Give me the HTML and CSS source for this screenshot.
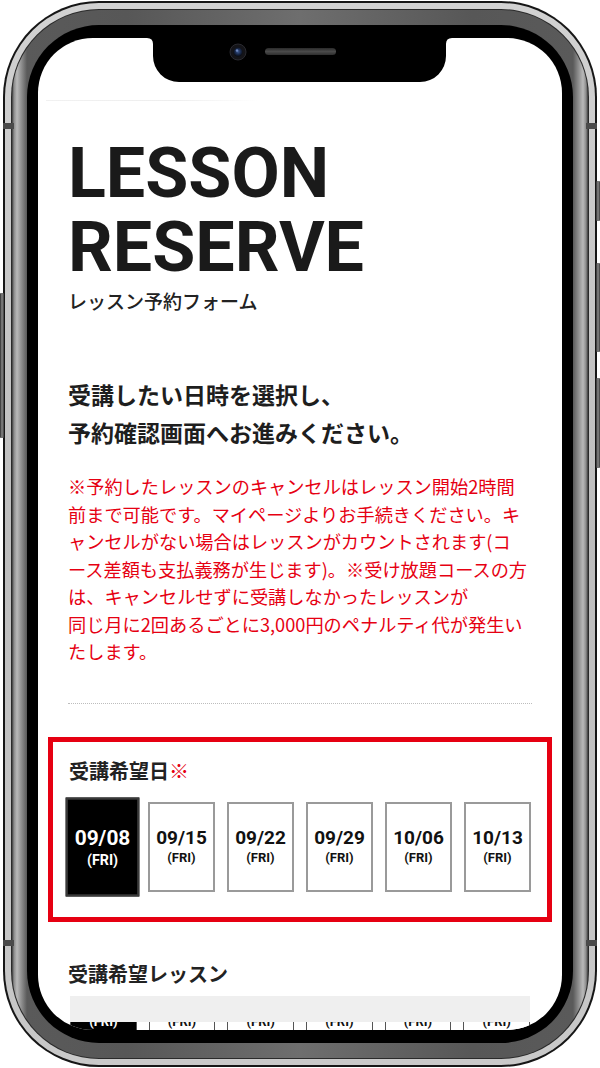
FILE: index.html
```html
<!DOCTYPE html>
<html lang="ja">
<head>
<meta charset="utf-8">
<title>LESSON RESERVE</title>
<link rel="stylesheet" href="styles.css">
</head>
<body>
<div class="device">
  <span class="side-btn side-btn-left"></span>
  <span class="side-btn side-btn-mute"></span>
  <span class="side-btn side-btn-vol1"></span>
  <span class="side-btn side-btn-vol2"></span>
  <span class="band band-tl"></span>
  <span class="band band-tr"></span>
  <span class="band band-bl"></span>
  <span class="band band-br"></span>
  <div class="ring-silver">
    <div class="ring-line">
      <div class="ring-gray">
        <div class="ring-black">
          <div class="screen">
            <svg class="notch" width="305" height="44" viewBox="0 0 305 44" aria-hidden="true">
              <defs>
                <radialGradient id="lens" cx="50%" cy="45%" r="55%">
                  <stop offset="0" stop-color="#3d5a94"/>
                  <stop offset="0.55" stop-color="#1a2a4c"/>
                  <stop offset="1" stop-color="#070a12"/>
                </radialGradient>
                <linearGradient id="spk" x1="0" y1="0" x2="0" y2="1">
                  <stop offset="0" stop-color="#2a2a2a"/>
                  <stop offset="0.5" stop-color="#4a4a4a"/>
                  <stop offset="1" stop-color="#2e2e2e"/>
                </linearGradient>
              </defs>
              <path d="M0 0 H305 Q299 0 299 6 V18 A26 26 0 0 1 273 44 H32 A26 26 0 0 1 6 18 V6 Q6 0 0 0 Z" fill="#000"/>
              <circle cx="91" cy="14" r="8" fill="#141418" stroke="#2a2a30" stroke-width="1"/>
              <circle cx="91" cy="14" r="4.5" fill="url(#lens)"/>
              <circle cx="90" cy="12.5" r="1.2" fill="#7f9bd6" opacity="0.8"/>
              <rect x="118" y="10" width="71" height="7" rx="3.5" fill="url(#spk)"/>
            </svg>
            <header class="topbar"><span class="topbar-line"></span></header>
            <main class="content">
              <h1 class="title">LESSON<br>RESERVE</h1>
              <p class="subtitle">レッスン予約フォーム</p>
              <p class="lead">受講したい日時を選択し、<br>予約確認画面へお進みください。</p>
              <p class="notice">※予約したレッスンのキャンセルはレッスン開始2時間<br>前まで可能です。マイページよりお手続きください。キ<br>ャンセルがない場合はレッスンがカウントされます(コ<br>ース差額も支払義務が生じます)。※受け放題コースの方<br>は、キャンセルせずに受講しなかったレッスンが<br>同じ月に2回あるごとに3,000円のペナルティ代が発生い<br>たします。</p>
              <hr class="divider">
              <section class="date-panel">
                <h2 class="field-label">受講希望日<span class="req">※</span></h2>
                <div class="dates">
                  <div class="date is-selected"><span class="date-md">09/08</span><span class="date-wd">(FRI)</span></div>
                  <div class="date"><span class="date-md">09/15</span><span class="date-wd">(FRI)</span></div>
                  <div class="date"><span class="date-md">09/22</span><span class="date-wd">(FRI)</span></div>
                  <div class="date"><span class="date-md">09/29</span><span class="date-wd">(FRI)</span></div>
                  <div class="date"><span class="date-md">10/06</span><span class="date-wd">(FRI)</span></div>
                  <div class="date"><span class="date-md">10/13</span><span class="date-wd">(FRI)</span></div>
                </div>
              </section>
              <section class="lesson">
                <h2 class="field-label">受講希望レッスン</h2>
                <div class="lesson-table">
                  <div class="lesson-head"></div>
                  <div class="lesson-clip">
                    <div class="lesson-row">
                      <div class="cell is-selected">(FRI)</div>
                      <div class="cell">(FRI)</div>
                      <div class="cell">(FRI)</div>
                      <div class="cell">(FRI)</div>
                      <div class="cell">(FRI)</div>
                      <div class="cell">(FRI)</div>
                    </div>
                  </div>
                </div>
              </section>
            </main>
          </div>
        </div>
      </div>
    </div>
  </div>
</div>
</body>
</html>
```

FILE: styles.css
```css
html, body {
  margin: 0;
  padding: 0;
  background: #fff;
  overflow: hidden;
}

body {
  width: 600px;
  height: 1068px;
  font-family: "Noto Sans CJK JP", "Noto Sans", sans-serif;
  color: #1a1a1a;
}

/* ---------- device frame ---------- */
.device {
  position: relative;
  box-sizing: border-box;
  width: 594px;
  height: 1066px;
  margin: 1px 3px 0;
  padding: 2px;
  border-radius: 96px;
  background: #161616;
}

.ring-silver {
  box-sizing: border-box;
  height: 100%;
  padding: 6px;
  border-radius: 94px;
  background: linear-gradient(to bottom, #d2d2d2, #bdbdbd 50%, #c9c9c9);
}

.ring-line {
  box-sizing: border-box;
  height: 100%;
  padding: 1px;
  border-radius: 88px;
  background: #2a2a2a;
}

.ring-gray {
  box-sizing: border-box;
  height: 100%;
  padding: 15px;
  border-radius: 87px;
  background: linear-gradient(to right,
    #3a3a3a 0px, #8c8c8c 2px, #b9b9b9 5px, #5a5a5a 15px,
    #575757 20%, #6e6e6e 50%, #575757 80%,
    #5a5a5a calc(100% - 15px), #b9b9b9 calc(100% - 5px), #8c8c8c calc(100% - 2px), #3a3a3a 100%);
}

.ring-black {
  box-sizing: border-box;
  height: 100%;
  padding: 13px 11px 13px;
  border-radius: 72px;
  background: #000;
}

.screen {
  position: relative;
  box-sizing: border-box;
  height: 100%;
  border-radius: 55px;
  background: #fff;
  overflow: hidden;
}

.side-btn {
  position: absolute;
  width: 4px;
  border-radius: 1px;
  background: linear-gradient(to right, #2b2b2b, #8a8a8a 50%, #3a3a3a);
}
.side-btn-left { left: -3px; top: 292px; height: 145px; }
.side-btn-mute { right: -3px; top: 180px; height: 40px; }
.side-btn-vol1 { right: -3px; top: 262px; height: 89px; }
.side-btn-vol2 { right: -3px; top: 377px; height: 90px; }

.band {
  position: absolute;
  z-index: 1;
  width: 11px;
  height: 6px;
  background: #4a4a4a;
}
.band-tl { left: 0; top: 122px; }
.band-tr { right: 0; top: 122px; }
.band-bl { left: 0; top: 939px; }
.band-br { right: 0; top: 939px; }

.notch {
  position: absolute;
  z-index: 2;
  top: 0;
  left: 109px;
  display: block;
}

/* ---------- page ---------- */
.topbar {
  height: 63px;
  display: flex;
  align-items: flex-end;
}
.topbar-line {
  display: block;
  width: 212px;
  height: 1px;
  margin-left: 8px;
  background: linear-gradient(to right, #f1f1f1, #eeeeee 60%, rgba(238, 238, 238, 0));
}

.content {
  padding: 0 30px;
}

.title {
  margin: 36px 0 0;
  font-family: Roboto, "Liberation Sans", sans-serif;
  font-weight: 700;
  font-size: 70px;
  line-height: 73.5px;
  color: #1a1a1a;
}

.subtitle {
  margin: 7px 0 0;
  font-size: 19px;
  line-height: 19px;
  font-weight: 500;
  color: #222;
}

.lead {
  margin: 65px 0 0;
  font-size: 23px;
  line-height: 38px;
  font-weight: 700;
  color: #1e1e1e;
}

.notice {
  margin: 22px 0 0;
  font-size: 18.2px;
  line-height: 27.5px;
  color: #e60012;
  white-space: nowrap;
}

.divider {
  height: 0;
  margin: 37px 0 0;
  border: 0;
  border-top: 1px dotted #bdbdbd;
}

.date-panel {
  margin: 33px -20px 0;
  padding: 19px 16px 25px;
  border: 5px solid #e60012;
}

.field-label {
  margin: 0;
  font-size: 20px;
  line-height: 20px;
  font-weight: 700;
  color: #222;
}

.req {
  color: #e60012;
}

.dates {
  display: grid;
  grid-template-columns: repeat(6, 1fr);
  gap: 12px;
  margin-top: 21px;
}

.date {
  box-sizing: border-box;
  height: 90px;
  border: 2px solid #9a9a9a;
  background: #fff;
  color: #111;
  display: flex;
  flex-direction: column;
  align-items: center;
  justify-content: center;
  font-family: Roboto, "Liberation Sans", sans-serif;
  font-weight: 700;
}

.date.is-selected {
  transform: scale(1.1);
  background: #000;
  border-color: #3a3a3a;
  color: #fff;
}

.date-md {
  font-size: 19px;
  line-height: 22px;
}

.date-wd {
  font-size: 13px;
  line-height: 16px;
  margin-top: 1px;
}

.lesson {
  margin-top: 42px;
}

.lesson-table {
  margin: 12px 2px 0;
}

.lesson-head {
  height: 26px;
  background: #efefef;
}

.lesson-clip {
  height: 30px;
  overflow: hidden;
}

.lesson-row {
  display: grid;
  grid-template-columns: repeat(6, 1fr);
  gap: 12px;
  margin-top: -8px;
}

.cell {
  box-sizing: border-box;
  height: 40px;
  border: 1px solid #555;
  border-top: 0;
  background: #fff;
  color: #111;
  text-align: center;
  font-family: Roboto, "Liberation Sans", sans-serif;
  font-weight: 700;
  font-size: 13px;
  line-height: 16px;
}

.cell.is-selected {
  background: #000;
  color: #fff;
}
```
